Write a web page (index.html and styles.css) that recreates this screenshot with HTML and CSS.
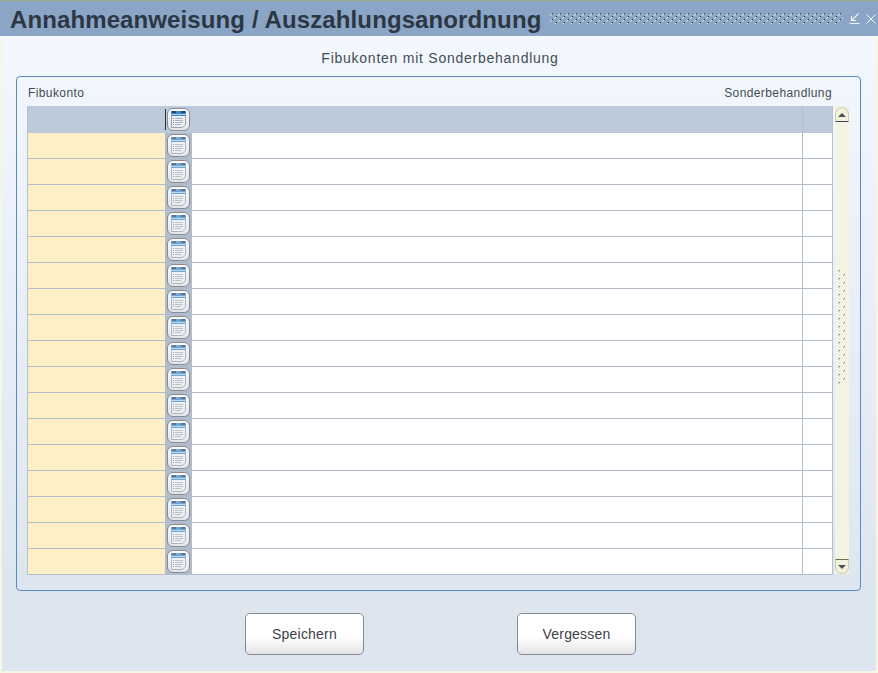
FILE: index.html
```html
<!DOCTYPE html>
<html lang="de">
<head>
<meta charset="utf-8">
<title>Annahmeanweisung / Auszahlungsanordnung</title>
<link rel="stylesheet" href="styles.css">
</head>
<body>
<svg class="defs" width="0" height="0" aria-hidden="true">
  <defs>
    <symbol id="doc" viewBox="0 0 15 17">
      <path d="M0.5 5V16.5H11.5L14.5 13.5V5" fill="#eef1f5" stroke="#98a2ae"/>
      <rect x="0" y="0" width="15" height="5" fill="#3f86c2"/>
      <rect x="1" y="0" width="4" height="2" fill="#1d4778"/>
      <rect x="10" y="0" width="4" height="2" fill="#1d4778"/>
      <rect x="0" y="3" width="15" height="1" fill="#a6d0ee"/>
      <path d="M4 7.5H12M4 9.5H12M4 11.5H12M4 13.5H10" stroke="#aab3be" stroke-width="1" fill="none"/>
      <path d="M2 7.5H3M2 9.5H3M2 11.5H3M2 13.5H3" stroke="#7f8a98" stroke-width="1" fill="none"/>
    </symbol>
    <pattern id="grip" width="8" height="6" patternUnits="userSpaceOnUse">
      <rect x="0" y="2" width="1" height="1" fill="#e6e5c0"/>
      <rect x="1" y="1" width="1" height="1" fill="#e6e5c0"/>
      <rect x="2" y="0" width="1" height="1" fill="#232c38"/>
      <rect x="4" y="5" width="1" height="1" fill="#e6e5c0"/>
      <rect x="5" y="4" width="1" height="1" fill="#e6e5c0"/>
      <rect x="6" y="3" width="1" height="1" fill="#232c38"/>
    </pattern>
    <pattern id="vgrip" width="10" height="8" patternUnits="userSpaceOnUse">
      <rect x="0" y="3" width="1" height="1" fill="#fff"/>
      <rect x="1" y="2" width="1" height="1" fill="#a9ab8c"/>
      <rect x="2" y="1" width="1" height="1" fill="#6a6d52"/>
      <rect x="5" y="7" width="1" height="1" fill="#fff"/>
      <rect x="6" y="6" width="1" height="1" fill="#a9ab8c"/>
      <rect x="7" y="5" width="1" height="1" fill="#6a6d52"/>
    </pattern>
  </defs>
</svg>
<div class="window">
  <header class="titlebar">
    <h1 class="title">Annahmeanweisung / Auszahlungsanordnung</h1>
    <svg class="title-grip" width="293" height="11"><rect width="293" height="11" fill="url(#grip)"/></svg>
    <svg class="win-icon" width="11" height="11" viewBox="0 0 11 11"><path d="M9.5 0.5L3 7M2.5 3V7.5H7M0.5 10.5H10.5" fill="none" stroke="#f2f5f0" stroke-width="1.1"/></svg>
    <svg class="win-icon win-close" width="10" height="10" viewBox="0 0 10 10"><path d="M0.5 0.5L9.5 9.5M9.5 0.5L0.5 9.5" fill="none" stroke="#f2f5f0" stroke-width="1"/></svg>
  </header>
  <main class="content">
    <h2 class="subtitle">Fibukonten mit Sonderbehandlung</h2>
    <section class="panel">
      <div class="labels"><span>Fibukonto</span><span>Sonderbehandlung</span></div>
      <div class="table-wrap">
        <div class="table">
          <div class="row head"><div class="c-a"></div><div class="c-b"><span class="btn btn-active"><svg class="ico"><use href="#doc"/></svg></span></div><div class="c-c"></div><div class="c-d"></div></div>
          <div class="row"><div class="c-a"></div><div class="c-b"><span class="btn"><svg class="ico"><use href="#doc"/></svg></span></div><div class="c-c"></div><div class="c-d"></div></div>
          <div class="row"><div class="c-a"></div><div class="c-b"><span class="btn"><svg class="ico"><use href="#doc"/></svg></span></div><div class="c-c"></div><div class="c-d"></div></div>
          <div class="row"><div class="c-a"></div><div class="c-b"><span class="btn"><svg class="ico"><use href="#doc"/></svg></span></div><div class="c-c"></div><div class="c-d"></div></div>
          <div class="row"><div class="c-a"></div><div class="c-b"><span class="btn"><svg class="ico"><use href="#doc"/></svg></span></div><div class="c-c"></div><div class="c-d"></div></div>
          <div class="row"><div class="c-a"></div><div class="c-b"><span class="btn"><svg class="ico"><use href="#doc"/></svg></span></div><div class="c-c"></div><div class="c-d"></div></div>
          <div class="row"><div class="c-a"></div><div class="c-b"><span class="btn"><svg class="ico"><use href="#doc"/></svg></span></div><div class="c-c"></div><div class="c-d"></div></div>
          <div class="row"><div class="c-a"></div><div class="c-b"><span class="btn"><svg class="ico"><use href="#doc"/></svg></span></div><div class="c-c"></div><div class="c-d"></div></div>
          <div class="row"><div class="c-a"></div><div class="c-b"><span class="btn"><svg class="ico"><use href="#doc"/></svg></span></div><div class="c-c"></div><div class="c-d"></div></div>
          <div class="row"><div class="c-a"></div><div class="c-b"><span class="btn"><svg class="ico"><use href="#doc"/></svg></span></div><div class="c-c"></div><div class="c-d"></div></div>
          <div class="row"><div class="c-a"></div><div class="c-b"><span class="btn"><svg class="ico"><use href="#doc"/></svg></span></div><div class="c-c"></div><div class="c-d"></div></div>
          <div class="row"><div class="c-a"></div><div class="c-b"><span class="btn"><svg class="ico"><use href="#doc"/></svg></span></div><div class="c-c"></div><div class="c-d"></div></div>
          <div class="row"><div class="c-a"></div><div class="c-b"><span class="btn"><svg class="ico"><use href="#doc"/></svg></span></div><div class="c-c"></div><div class="c-d"></div></div>
          <div class="row"><div class="c-a"></div><div class="c-b"><span class="btn"><svg class="ico"><use href="#doc"/></svg></span></div><div class="c-c"></div><div class="c-d"></div></div>
          <div class="row"><div class="c-a"></div><div class="c-b"><span class="btn"><svg class="ico"><use href="#doc"/></svg></span></div><div class="c-c"></div><div class="c-d"></div></div>
          <div class="row"><div class="c-a"></div><div class="c-b"><span class="btn"><svg class="ico"><use href="#doc"/></svg></span></div><div class="c-c"></div><div class="c-d"></div></div>
          <div class="row"><div class="c-a"></div><div class="c-b"><span class="btn"><svg class="ico"><use href="#doc"/></svg></span></div><div class="c-c"></div><div class="c-d"></div></div>
          <div class="row"><div class="c-a"></div><div class="c-b"><span class="btn"><svg class="ico"><use href="#doc"/></svg></span></div><div class="c-c"></div><div class="c-d"></div></div>
        </div>
        <div class="scrollbar">
          <div class="sb-up"><span class="tri-up"></span></div>
          <div class="sb-track"><svg class="sb-grip" width="10" height="116"><rect width="10" height="116" fill="url(#vgrip)"/></svg></div>
          <div class="sb-down"><span class="tri-down"></span></div>
        </div>
      </div>
    </section>
    <div class="actions">
      <button class="action" type="button">Speichern</button>
      <button class="action" type="button">Vergessen</button>
    </div>
  </main>
</div>
</body>
</html>
```
FILE: styles.css
```css
* { box-sizing: border-box; }
html, body { margin: 0; height: 100%; overflow: hidden; }
body {
  background: #f6f5e6;
  font-family: "Liberation Sans", Arial, sans-serif;
  color: #33393f;
}
.defs { position: absolute; }
.window {
  width: 878px;
  height: 671px;
  border-top: 1px solid #a3a77f;
  display: flex;
  flex-direction: column;
}
.titlebar {
  height: 35px;
  flex: none;
  background: #8aa5c5;
  display: flex;
  align-items: center;
  padding: 0 0 0 10px;
}
.title {
  margin: 0;
  width: 531px;
  flex: none;
  padding-top: 2px;
  font-size: 24px;
  font-weight: bold;
  letter-spacing: 0.11px;
  color: #2d3744;
  white-space: nowrap;
  line-height: 35px;
}
.title-grip { margin-left: 9px; flex: none; }
.win-icon { margin-left: 6px; flex: none; }
.win-close { margin-left: 6px; }
.content {
  flex: 1;
  margin: 0 2px;
  padding: 0 14px;
  background: linear-gradient(#f3f8fe 0, #dde5ef 88%);
  display: flex;
  flex-direction: column;
}
.subtitle {
  margin: 0;
  height: 40px;
  padding: 13px 0 0 2px;
  font-size: 14px;
  font-weight: normal;
  line-height: 18px;
  text-align: center;
  letter-spacing: 0.75px;
  color: #454c54;
}
.panel {
  height: 515px;
  width: 845px;
  border: 1px solid #5b89c4;
  border-radius: 4px;
  padding: 9px 0 0 10px;
}
.labels {
  height: 20px;
  width: 806px;
  display: flex;
  justify-content: space-between;
  padding: 0 1px;
  font-size: 12px;
  line-height: 15px;
  letter-spacing: 0.4px;
  color: #454c54;
}
.table-wrap { display: flex; align-items: flex-start; }
.table {
  width: 806px;
  border-left: 1px solid #b6c0d0;
  border-right: 1px solid #b6c0d0;
  flex: none;
}
.row {
  display: grid;
  grid-template-columns: 137px 27px 1fr 30px;
  height: 26px;
  border-bottom: 1px solid #b2bccb;
  background: #fff;
}
.row.head {
  height: 27px;
  background: #bccadc;
  border-bottom: 0;
}
.c-a { background: #feefc6; }
.c-b {
  background: #b3bcca;
  display: flex;
  align-items: center;
  justify-content: center;
}
.c-d { border-left: 1px solid #b2bccb; }
.row.head .c-a, .row.head .c-b { background: transparent; }
.row.head .c-b { position: relative; }
.row.head .c-b::before {
  content: "";
  position: absolute;
  left: 0;
  top: 3px;
  height: 21px;
  width: 1px;
  background: #26303c;
}
.row.head .c-d { border-left-color: #b4c0d1; }
.btn {
  width: 23px;
  height: 23px;
  border: 1px solid #868c96;
  border-radius: 6px;
  background: linear-gradient(#fbfbfc, #e4e6e9);
  display: flex;
  align-items: center;
  justify-content: center;
}
.ico { width: 15px; height: 17px; display: block; opacity: 0.72; }
.btn-active .ico { opacity: 1; }
.scrollbar {
  width: 14px;
  height: 467px;
  margin: 1px 0 0 2px;
  display: flex;
  flex-direction: column;
  background: #f5f3e3;
}
.sb-up, .sb-down {
  height: 15px;
  flex: none;
  display: flex;
  align-items: center;
  justify-content: center;
  background: #f3f2dc;
  border: 1px solid #cdcfa8;
}
.sb-up { border-radius: 7px 7px 0 0; border-bottom: 1px solid #3e4550; }
.sb-down { border-radius: 0 0 7px 7px; border-top: 1px solid #6e7150; }
.tri-up {
  width: 0; height: 0;
  border-left: 4px solid transparent;
  border-right: 4px solid transparent;
  border-bottom: 4px solid #4b5058;
}
.tri-down {
  width: 0; height: 0;
  border-left: 4px solid transparent;
  border-right: 4px solid transparent;
  border-top: 4px solid #4b5058;
}
.sb-track {
  flex: 1;
  display: flex;
  justify-content: center;
  padding-top: 147px;
}
.sb-grip { display: block; }
.actions {
  display: flex;
  gap: 153px;
  padding: 22px 0 0 229px;
}
.action {
  width: 119px;
  height: 42px;
  border: 1px solid #858b94;
  border-radius: 5px;
  background: linear-gradient(#fff 55%, #e4e5e8);
  font-family: "Liberation Sans", Arial, sans-serif;
  font-size: 14px;
  letter-spacing: 0.2px;
  color: #3b4249;
  padding: 0;
}
```
